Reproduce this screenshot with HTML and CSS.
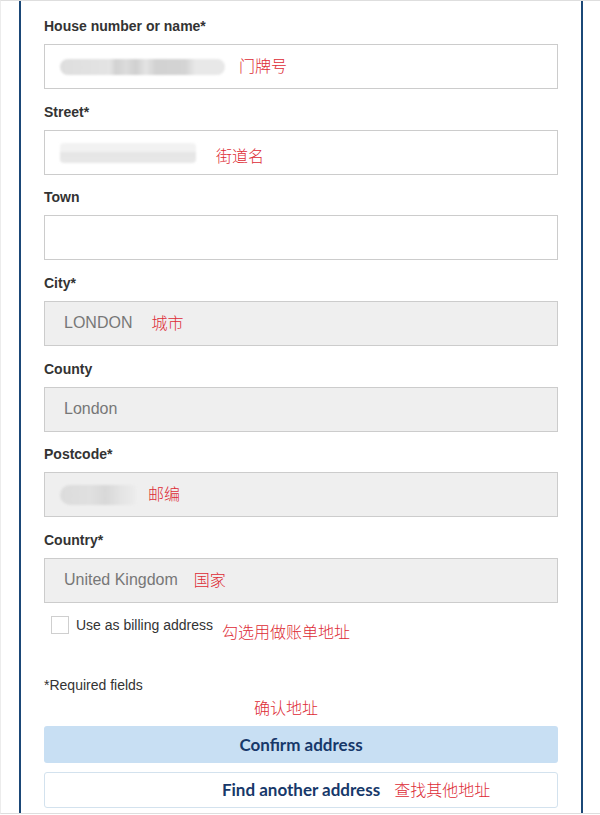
FILE: index.html
```html
<!DOCTYPE html>
<html>
<head>
<meta charset="utf-8">
<link rel="stylesheet" href="styles.css">
</head>
<body>
<div class="frame">
  <div class="panel">
    <div class="field">
      <div class="label">House number or name*</div>
      <div class="box">
        <span class="blur blur-house"></span>
        <span class="note in-box note-house">门牌号</span>
      </div>
    </div>
    <div class="field">
      <div class="label">Street*</div>
      <div class="box">
        <span class="blur blur-street"></span>
        <span class="note in-box note-street">街道名</span>
      </div>
    </div>
    <div class="field">
      <div class="label">Town</div>
      <div class="box"></div>
    </div>
    <div class="field">
      <div class="label">City*</div>
      <div class="box disabled">
        <span class="value">LONDON</span>
        <span class="note in-box note-city">城市</span>
      </div>
    </div>
    <div class="field">
      <div class="label">County</div>
      <div class="box disabled">
        <span class="value">London</span>
      </div>
    </div>
    <div class="field">
      <div class="label">Postcode*</div>
      <div class="box disabled">
        <span class="blur blur-post"></span>
        <span class="note in-box note-post">邮编</span>
      </div>
    </div>
    <div class="field">
      <div class="label">Country*</div>
      <div class="box disabled">
        <span class="value">United Kingdom</span>
        <span class="note in-box note-country">国家</span>
      </div>
    </div>
    <div class="check-row">
      <span class="checkbox"></span>
      <span class="check-text">Use as billing address</span>
      <span class="note note-billing">勾选用做账单地址</span>
    </div>
    <div class="required">*Required fields</div>
    <div class="note note-confirm">确认地址</div>
    <div class="btn btn-primary">Confirm address</div>
    <div class="btn btn-secondary">
      <span class="btn-label">Find another address<span class="note note-find">查找其他地址</span></span>
    </div>
  </div>
</div>
</body>
</html>
```

FILE: styles.css
```css
html, body {
  margin: 0;
  padding: 0;
  background: #fff;
}
body {
  font-family: "Liberation Sans", Arial, sans-serif;
  color: #333;
}
.frame {
  width: 600px;
  height: 814px;
  box-sizing: border-box;
  border-top: 1px solid #dedede;
  border-bottom: 1px solid #dedede;
  border-left: 1px solid #ececec;
  padding-left: 18px;
  overflow: hidden;
}
.panel {
  width: 564px;
  height: 100%;
  box-sizing: border-box;
  border-left: 2px solid #1b4877;
  border-right: 2px solid #1b4877;
  padding: 16px 23px 0 23px;
}
.field {
  display: flex;
  flex-direction: column;
  margin-bottom: 13.67px;
}
.label {
  font-size: 14px;
  font-weight: bold;
  line-height: 18px;
  color: #333;
  margin-bottom: 9px;
}
.box {
  height: 45px;
  box-sizing: border-box;
  border: 1px solid #cccccc;
  background: #fff;
  display: flex;
  align-items: center;
  padding-left: 15px;
}
.box.disabled {
  background: #efefef;
  padding-left: 19px;
}
.value {
  font-size: 16px;
  color: #777;
}
.note {
  font-family: "Noto Sans CJK SC", sans-serif;
  font-weight: 300;
  font-size: 16px;
  color: #dd2b35;
  line-height: 20px;
}
.in-box {
  margin-bottom: 3px;
}
.blur {
  display: inline-block;
  border-radius: 8px;
  filter: blur(1.2px);
}
.blur-house {
  width: 165px;
  height: 16px;
  background: linear-gradient(90deg, #dedede 0, #e4e4e4 30%, #d2d2d2 34%, #dcdcdc 40%, #d0d0d0 46%, #e4e4e4 52%, #d2d2d2 58%, #d4d4d4 76%, #e8e8e8 82%, #e8e8e8 100%);
}
.note-house { margin-left: 14px; }
.blur-street {
  width: 136px;
  height: 20px;
  margin-top: 2px;
  border-radius: 4px;
  background: linear-gradient(180deg, #f2f2f2 0, #f2f2f2 40%, #e6e6e6 50%, #e8e8e8 100%);
}
.note-street { margin-left: 20px; margin-top: 9px; }
.note-city { margin-left: 19px; }
.blur-post {
  width: 76px;
  height: 20px;
  margin-left: -4px;
  border-radius: 10px 4px 4px 10px;
  background: linear-gradient(90deg, #dcdcdc 0, #e0e0e0 40%, #d8d8d8 60%, #e4e4e4 80%, #ececec 100%);
}
.note-post { margin-left: 12px; }
.note-country { margin-left: 16px; }
.check-row {
  display: flex;
  align-items: center;
  margin-top: -3px;
  padding-left: 7px;
  height: 22px;
}
.checkbox {
  width: 16px;
  height: 16px;
  border: 1px solid #cfcfcf;
  background: #fff;
  flex: none;
}
.check-text {
  font-size: 14px;
  color: #333;
  margin-left: 7px;
}
.note-billing {
  margin-left: 9px;
  margin-top: 12px;
}
.required {
  font-size: 14px;
  color: #333;
  line-height: 18px;
  margin-top: 40px;
}
.note-confirm {
  text-align: left;
  padding-left: 210px;
  margin-top: 2px;
  line-height: 22px;
}
.btn {
  box-sizing: border-box;
  display: flex;
  align-items: center;
  justify-content: center;
  font-family: Lato, "Open Sans", sans-serif;
  font-weight: bold;
  font-size: 17px;
  color: #17386a;
  border-radius: 3px;
}
.btn-primary {
  height: 37px;
  margin-top: 8px;
  background: #c8dff3;
}
.btn-secondary {
  height: 36px;
  margin-top: 9px;
  background: #fff;
  border: 1px solid #d3e2ee;
}
.btn-label {
  position: relative;
}
.note-find {
  position: absolute;
  left: 100%;
  top: 0;
  margin-left: 14px;
  white-space: nowrap;
}
```
